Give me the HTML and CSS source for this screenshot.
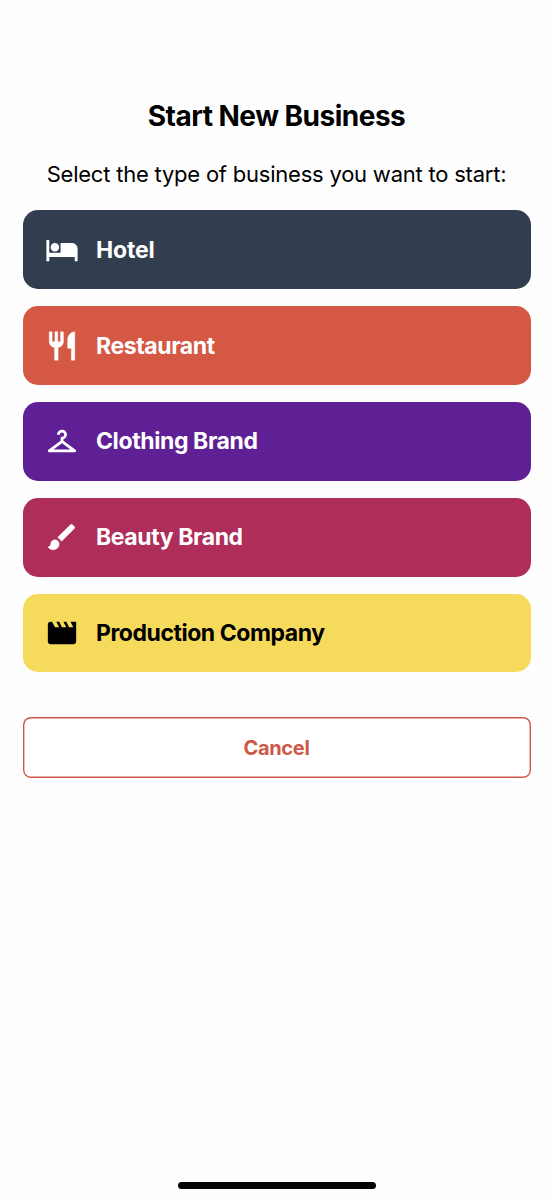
FILE: index.html
```
<!DOCTYPE html>
<html lang="en">
<head>
<meta charset="utf-8">
<title>Start New Business</title>
<link rel="stylesheet" href="styles.css">
</head>
<body>
<main class="screen">
  <h1 class="title">Start New Business</h1>
  <p class="subtitle">Select the type of business you want to start:</p>
  <div class="options">
    <button class="option hotel"><svg class="icon" viewBox="0 0 24 24"><path d="M7 13c1.660 0 3-1.340 3-3S8.660 7 7 7s-3 1.340-3 3 1.340 3 3 3zm12-6h-8v7H3V5H1v15h2v-3h18v3h2v-9c0-2.210-1.790-4-4-4z"/></svg><span>Hotel</span></button>
    <button class="option restaurant"><svg class="icon bold" viewBox="0 0 24 24"><path d="M11 9H9V2H7v7H5V2H3v7c0 2.120 1.660 3.840 3.750 3.970V22h2.500v-9.030C11.340 12.840 13 11.120 13 9V2h-2v7zm5-2v6.600h2.600V22H21V2c-2.500 0-4.600 2.300-5 5z"/></svg><span>Restaurant</span></button>
    <button class="option clothing"><svg class="icon" viewBox="0 0 24 24"><path d="M21.600 18.200 13 11.750v-.91c1.650-.49 2.800-2.170 2.430-4.050-.26-1.310-1.300-2.400-2.610-2.700C10.540 3.570 8.500 5.300 8.500 7.500h2c0-.83.67-1.500 1.500-1.500s1.500.67 1.500 1.500c0 .84-.69 1.520-1.530 1.500-.54-.01-.97.45-.97.990v1.760L2.400 18.200c-.77.58-.36 1.800.6 1.800h18c.96 0 1.370-1.220.6-1.800zM6 18l6-4.500 6 4.500H6z"/></svg><span>Clothing Brand</span></button>
    <button class="option beauty"><svg class="icon bold" viewBox="0 0 24 24"><path d="M7 14c-1.660 0-3 1.340-3 3 0 1.310-1.160 2-2 2 .92 1.220 2.490 2 4 2 2.210 0 4-1.790 4-4 0-1.660-1.340-3-3-3zm13.710-9.370-1.340-1.340a1 1 0 0 0-1.410 0L9 12.250 11.750 15l8.960-8.960a1 1 0 0 0 0-1.410z"/></svg><span>Beauty Brand</span></button>
    <button class="option production"><svg class="icon" viewBox="0 0 24 24"><path d="m18 4 2 4h-3l-2-4h-2l2 4h-3l-2-4H8l2 4H7L5 4H4c-1.100 0-1.990.9-1.990 2L2 18c0 1.100.9 2 2 2h16c1.100 0 2-.9 2-2V4h-4z"/></svg><span>Production Company</span></button>
  </div>
  <button class="cancel">Cancel</button>
  <div class="home-indicator"></div>
</main>
</body>
</html>
```
FILE: styles.css
```
* { box-sizing: border-box; }
body { margin: 0; background: #fefefe; color: #000; font-family: Inter, sans-serif; }
.screen { display: flex; flex-direction: column; height: 1200px; padding: 98px 22.500px 11.500px; }
.title { margin: 0; font-size: 28px; line-height: 36px; font-weight: 700; letter-spacing: -0.5px; text-align: center; }
.subtitle { margin: 25px 0 0; font-size: 22px; line-height: 30px; letter-spacing: -0.22px; text-align: center; white-space: nowrap; }
.options { display: flex; flex-direction: column; gap: 17px; margin-top: 21.400px; }
.option { display: flex; align-items: center; gap: 17.500px; height: 78.800px; padding: 0 22px; border: 0; border-radius: 15px; color: #fff; font: 650 23px/30px Inter, sans-serif; letter-spacing: -0.4px; white-space: nowrap; }
.icon { width: 34px; height: 34px; fill: currentColor; flex: none; }
.bold { stroke: currentColor; stroke-width: 0.3; stroke-linejoin: round; }
.hotel { background: #323e4f; letter-spacing: -0.2px; }
.restaurant { background: #d45844; }
.clothing { background: #602095; }
.beauty { background: #af2d5a; }
.production { background: #f6da5c; color: #000; letter-spacing: -0.45px; }
.cancel { height: 60.500px; margin-top: 45px; padding: 0; border: 0; border-radius: 8px; box-shadow: inset 0 0 0 1.400px #ce5847; background: #fff; color: #ce5847; font: 650 20px/26px Inter, sans-serif; letter-spacing: -0.3px; }
.home-indicator { width: 198px; height: 7px; margin: auto auto 0; border-radius: 4px; background: #000; }
```
